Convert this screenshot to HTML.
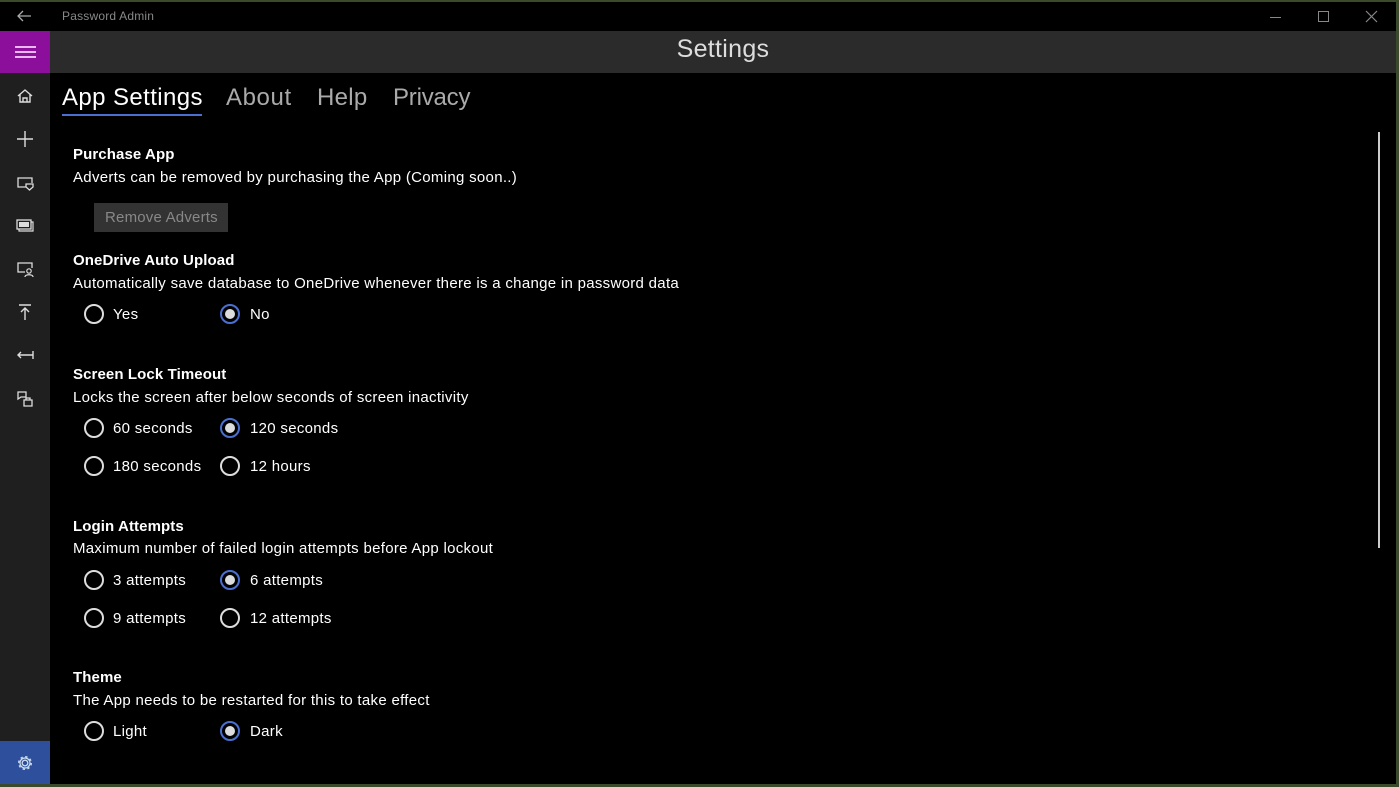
<!DOCTYPE html>
<html><head><meta charset="utf-8"><style>
*{margin:0;padding:0;box-sizing:border-box}
body{width:1399px;height:787px;background:#3a4a2a;font-family:"Liberation Sans",sans-serif;overflow:hidden;position:relative}
#win{position:absolute;left:0;top:2px;width:1396px;height:782px;background:#000}
.abs{position:absolute}
.t{color:#fff;font-size:15px;position:absolute;white-space:nowrap;letter-spacing:0.3px}
.h{font-weight:bold;letter-spacing:0.1px}
.r{position:absolute;width:20px;height:20px;border:2px solid #ddd;border-radius:50%}
.r.on{border-color:#4a6fd0}
.r.on::after{content:"";position:absolute;left:3px;top:3px;width:10px;height:10px;border-radius:50%;background:#ddd}
.ic{position:absolute;left:15px;width:20px;height:20px}
</style></head><body>
<div id="win">
<div class="abs" style="left:0;top:0;width:1396px;height:29px;background:#000"></div>
<svg class="abs" style="left:16px;top:7px" width="16" height="14"><path d="M15 7H2M7 2L2 7l5 5" stroke="#aaa" stroke-width="1.3" fill="none"/></svg>
<div class="t" style="left:62px;top:7px;font-size:12px;color:#888;letter-spacing:0.2px">Password Admin</div>
<div class="abs" style="left:1270px;top:15px;width:11px;height:1px;background:#888"></div>
<div class="abs" style="left:1318px;top:9px;width:11px;height:11px;border:1px solid #888"></div>
<svg class="abs" style="left:1365px;top:8px" width="13" height="13"><path d="M1 1l11 11M12 1L1 12" stroke="#888" stroke-width="1.2"/></svg>
<div class="abs" style="left:0;top:29px;width:50px;height:42px;background:#8b0f9b"></div>
<div class="abs" style="left:15px;top:44px;width:21px;height:2px;background:#e8b8ee;box-shadow:0 5px 0 #e8b8ee,0 10px 0 #e8b8ee"></div>
<div class="abs" style="left:50px;top:29px;width:1346px;height:42px;background:#2b2b2b"></div>
<div class="t" style="left:50px;width:1346px;text-align:center;top:33px;font-size:25px;color:#ddd">Settings</div>
<div class="abs" style="left:0;top:71px;width:50px;height:711px;background:#1f1f1f"></div>
<svg class="ic" style="top:84px" viewBox="0 0 20 20"><path d="M3 10L10 4l7 6M5 8v8h10V8M8 16v-4h4v4" stroke="#ddd" stroke-width="1.4" fill="none"/></svg>
<svg class="ic" style="top:127px" viewBox="0 0 20 20"><path d="M10 2v16M2 10h16" stroke="#ddd" stroke-width="1.4"/></svg>
<svg class="ic" style="top:171px" viewBox="0 0 20 20"><path d="M11 14H3V5h14v5M11 11h7v3l-3.5 3L11 14z" stroke="#ddd" stroke-width="1.3" fill="none"/></svg>
<svg class="ic" style="top:213px" viewBox="0 0 20 20"><rect x="2" y="5" width="14" height="9" stroke="#ddd" stroke-width="1.3" fill="none"/><rect x="4" y="7" width="10" height="5" fill="#ddd"/><path d="M16 7h2v9H4v-2" stroke="#ddd" stroke-width="1.2" fill="none"/></svg>
<svg class="ic" style="top:257px" viewBox="0 0 20 20"><path d="M10 13H3V4h14v5" stroke="#ddd" stroke-width="1.3" fill="none"/><circle cx="14" cy="12" r="2.2" stroke="#ddd" fill="none" stroke-width="1.2"/><path d="M10 18c0-3 8-3 8 0" stroke="#ddd" fill="none" stroke-width="1.2"/></svg>
<svg class="ic" style="top:300px" viewBox="0 0 20 20"><path d="M4 3h12M10 18V6M6 10l4-4 4 4" stroke="#ddd" stroke-width="1.4" fill="none"/></svg>
<svg class="ic" style="top:343px" viewBox="0 0 20 20"><path d="M18 6v8M18 10H3M6 7l-3 3 3 3" stroke="#ddd" stroke-width="1.4" fill="none"/></svg>
<svg class="ic" style="top:387px" viewBox="0 0 20 20"><path d="M3 3h8v5H6L3 10zM9 11h8v6H9zM11 11V9h4v2" stroke="#ddd" stroke-width="1.3" fill="none"/></svg>
<div class="abs" style="left:0;top:739px;width:50px;height:43px;background:#2d4f9c"></div>
<svg class="abs" style="left:16px;top:752px" width="18" height="18" viewBox="0 0 18 18"><circle cx="9" cy="9" r="2.8" stroke="#cde" fill="none" stroke-width="1.3"/><circle cx="9" cy="9" r="6.3" stroke="#cde" fill="none" stroke-width="1.4" stroke-dasharray="2.4 2.55"/><circle cx="9" cy="9" r="5" stroke="#cde" fill="none" stroke-width="1.2"/></svg>
<div class="t" style="left:62px;top:82px;font-size:24px;color:#fff;letter-spacing:0.4px">App Settings</div>
<div class="abs" style="left:62px;top:112px;width:140px;height:2px;background:#4a6fd0"></div>
<div class="t" style="left:226px;top:82px;font-size:24px;color:#aaa;letter-spacing:0.6px">About</div>
<div class="t" style="left:317px;top:82px;font-size:24px;color:#aaa">Help</div>
<div class="t" style="left:393px;top:82px;font-size:24px;color:#aaa;letter-spacing:-0.2px">Privacy</div>
<div class="abs" style="left:1378px;top:130px;width:2px;height:416px;background:#ccc"></div>
<div class="t h" style="left:73px;top:144px">Purchase App</div>
<div class="t" style="left:73px;top:167px">Adverts can be removed by purchasing the App (Coming soon..)</div>
<div class="abs" style="left:94px;top:201px;width:134px;height:29px;background:#333"></div>
<div class="t" style="left:105px;top:207px;color:#888;letter-spacing:0.2px">Remove Adverts</div>
<div class="t h" style="left:73px;top:250px">OneDrive Auto Upload</div>
<div class="t" style="left:73px;top:273px">Automatically save database to OneDrive whenever there is a change in password data</div>
<div class="r" style="left:84px;top:302px"></div><div class="t" style="left:113px;top:304px">Yes</div>
<div class="r on" style="left:220px;top:302px"></div><div class="t" style="left:250px;top:304px">No</div>
<div class="t h" style="left:73px;top:364px">Screen Lock Timeout</div>
<div class="t" style="left:73px;top:387px">Locks the screen after below seconds of screen inactivity</div>
<div class="r" style="left:84px;top:416px"></div><div class="t" style="left:113px;top:418px">60 seconds</div>
<div class="r on" style="left:220px;top:416px"></div><div class="t" style="left:250px;top:418px">120 seconds</div>
<div class="r" style="left:84px;top:454px"></div><div class="t" style="left:113px;top:456px">180 seconds</div>
<div class="r" style="left:220px;top:454px"></div><div class="t" style="left:250px;top:456px">12 hours</div>
<div class="t h" style="left:73px;top:516px">Login Attempts</div>
<div class="t" style="left:73px;top:538px">Maximum number of failed login attempts before App lockout</div>
<div class="r" style="left:84px;top:568px"></div><div class="t" style="left:113px;top:570px">3 attempts</div>
<div class="r on" style="left:220px;top:568px"></div><div class="t" style="left:250px;top:570px">6 attempts</div>
<div class="r" style="left:84px;top:606px"></div><div class="t" style="left:113px;top:608px">9 attempts</div>
<div class="r" style="left:220px;top:606px"></div><div class="t" style="left:250px;top:608px">12 attempts</div>
<div class="t h" style="left:73px;top:667px">Theme</div>
<div class="t" style="left:73px;top:690px">The App needs to be restarted for this to take effect</div>
<div class="r" style="left:84px;top:719px"></div><div class="t" style="left:113px;top:721px">Light</div>
<div class="r on" style="left:220px;top:719px"></div><div class="t" style="left:250px;top:721px">Dark</div>
</div>
</body></html>
